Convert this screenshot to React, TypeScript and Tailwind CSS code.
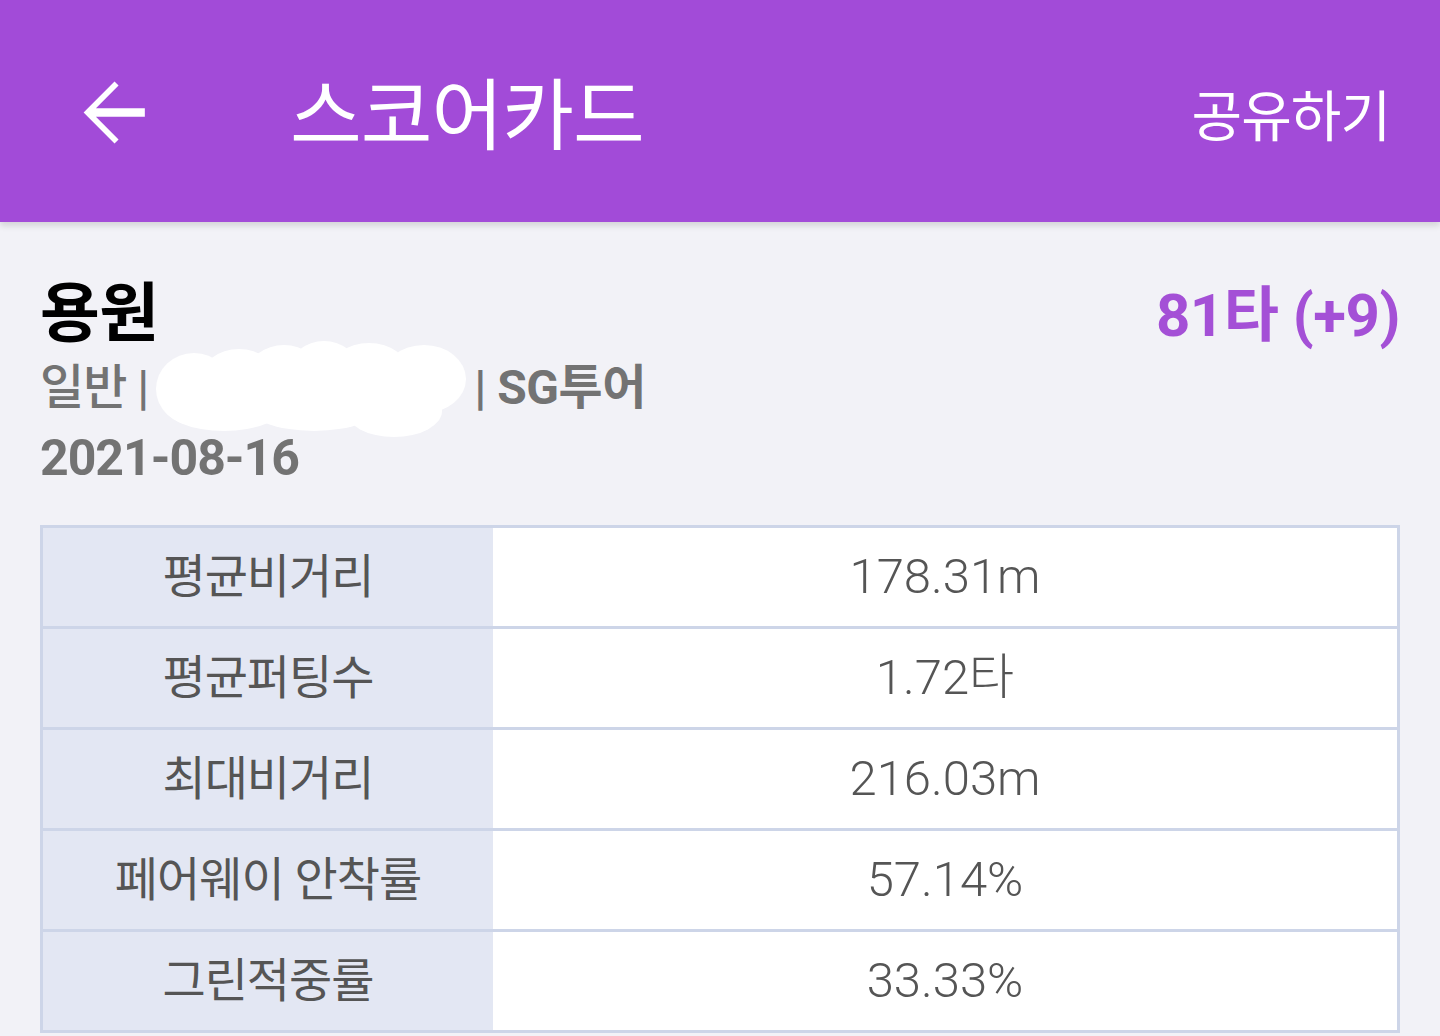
const STATS: { label: string; value: string }[] = [
  { label: '평균비거리', value: '178.31m' },
  { label: '평균퍼팅수', value: '1.72타' },
  { label: '최대비거리', value: '216.03m' },
  { label: '페어웨이 안착률', value: '57.14%' },
  { label: '그린적중률', value: '33.33%' },
]

const FONT = "font-['Roboto','Noto_Sans_CJK_KR',sans-serif]"

function BackArrow() {
  return (
    <svg width="97" height="97" viewBox="0 0 24 24" className="shrink-0 -ml-[16px] mt-[2px]" fill="white">
      <path d="M20 10.95H7.9l5.6-5.6L12.5 4.35 4.85 12l7.65 7.65 1-1-5.6-5.6H20v-2.1z" />
    </svg>
  )
}

function Redacted() {
  // white scribble that hides the course name
  return (
    <svg width="314" height="98" viewBox="0 0 314 98" className="-my-6 mx-[6px] shrink-0">
      <g fill="#fff">
        <ellipse cx="40" cy="50" rx="38" ry="36" />
        <ellipse cx="85" cy="40" rx="38" ry="30" />
        <ellipse cx="130" cy="34" rx="36" ry="28" />
        <ellipse cx="170" cy="30" rx="34" ry="28" />
        <ellipse cx="215" cy="34" rx="40" ry="30" />
        <ellipse cx="270" cy="40" rx="42" ry="34" />
        <ellipse cx="70" cy="66" rx="60" ry="26" />
        <ellipse cx="160" cy="64" rx="70" ry="28" />
        <ellipse cx="240" cy="72" rx="48" ry="26" />
      </g>
    </svg>
  )
}

export default function App() {
  return (
    <div className={`w-[1440px] h-[1036px] overflow-hidden bg-[#f2f2f7] ${FONT}`}>
      {/* App bar */}
      <div className="h-[222px] bg-[#a24bd8] flex items-center pl-[80px] pr-[50px] text-white shadow-[0_4px_6px_rgba(0,0,0,0.12)] relative">
        <BackArrow />
        <h1 className="ml-[129px] pt-[14px] text-[78px] font-normal leading-none tracking-[-1px]">스코어카드</h1>
        <span className="ml-auto pt-[12px] text-[55px] leading-none tracking-[-1px]">공유하기</span>
      </div>

      <div className="px-[40px] pt-[56px]">
        {/* Round summary */}
        <div className="flex justify-between items-start">
          <div className="flex flex-col">
            <h2 className="text-[65px] font-bold text-black leading-[72px] tracking-[-0.5px]">용원</h2>
            <div className="flex items-center text-[48px] text-[#737373] leading-[64px] mt-[6px]">
              <span className="font-medium tracking-[-1px]">일반 |</span>
              <Redacted />
              <span className="font-bold tracking-[-0.5px]">| SG투어</span>
            </div>
            <div className="text-[50px] font-bold text-[#737373] leading-[64px] mt-[6px] tracking-[-1px]">2021-08-16</div>
          </div>
          <div className="text-[60px] font-bold text-[#a450d6] leading-[72px] pt-[2px] tracking-[-0.5px]">81타 (+9)</div>
        </div>

        {/* Stats table */}
        <div className="mt-[35px] border-[3px] border-[#cdd5e8]">
          {STATS.map((s, i) => (
            <div
              key={s.label}
              className={`grid grid-cols-[450px_1fr] box-content h-[98px] ${i > 0 ? 'border-t-[3px] border-[#cdd5e8]' : ''}`}
            >
              <div className="bg-[#e3e7f3] flex items-center justify-center text-[47px] text-[#555] tracking-[-1px]">
                {s.label}
              </div>
              <div className="bg-white flex items-center justify-center text-[49px] text-[#555] font-light">
                {s.value}
              </div>
            </div>
          ))}
        </div>
      </div>
    </div>
  )
}
